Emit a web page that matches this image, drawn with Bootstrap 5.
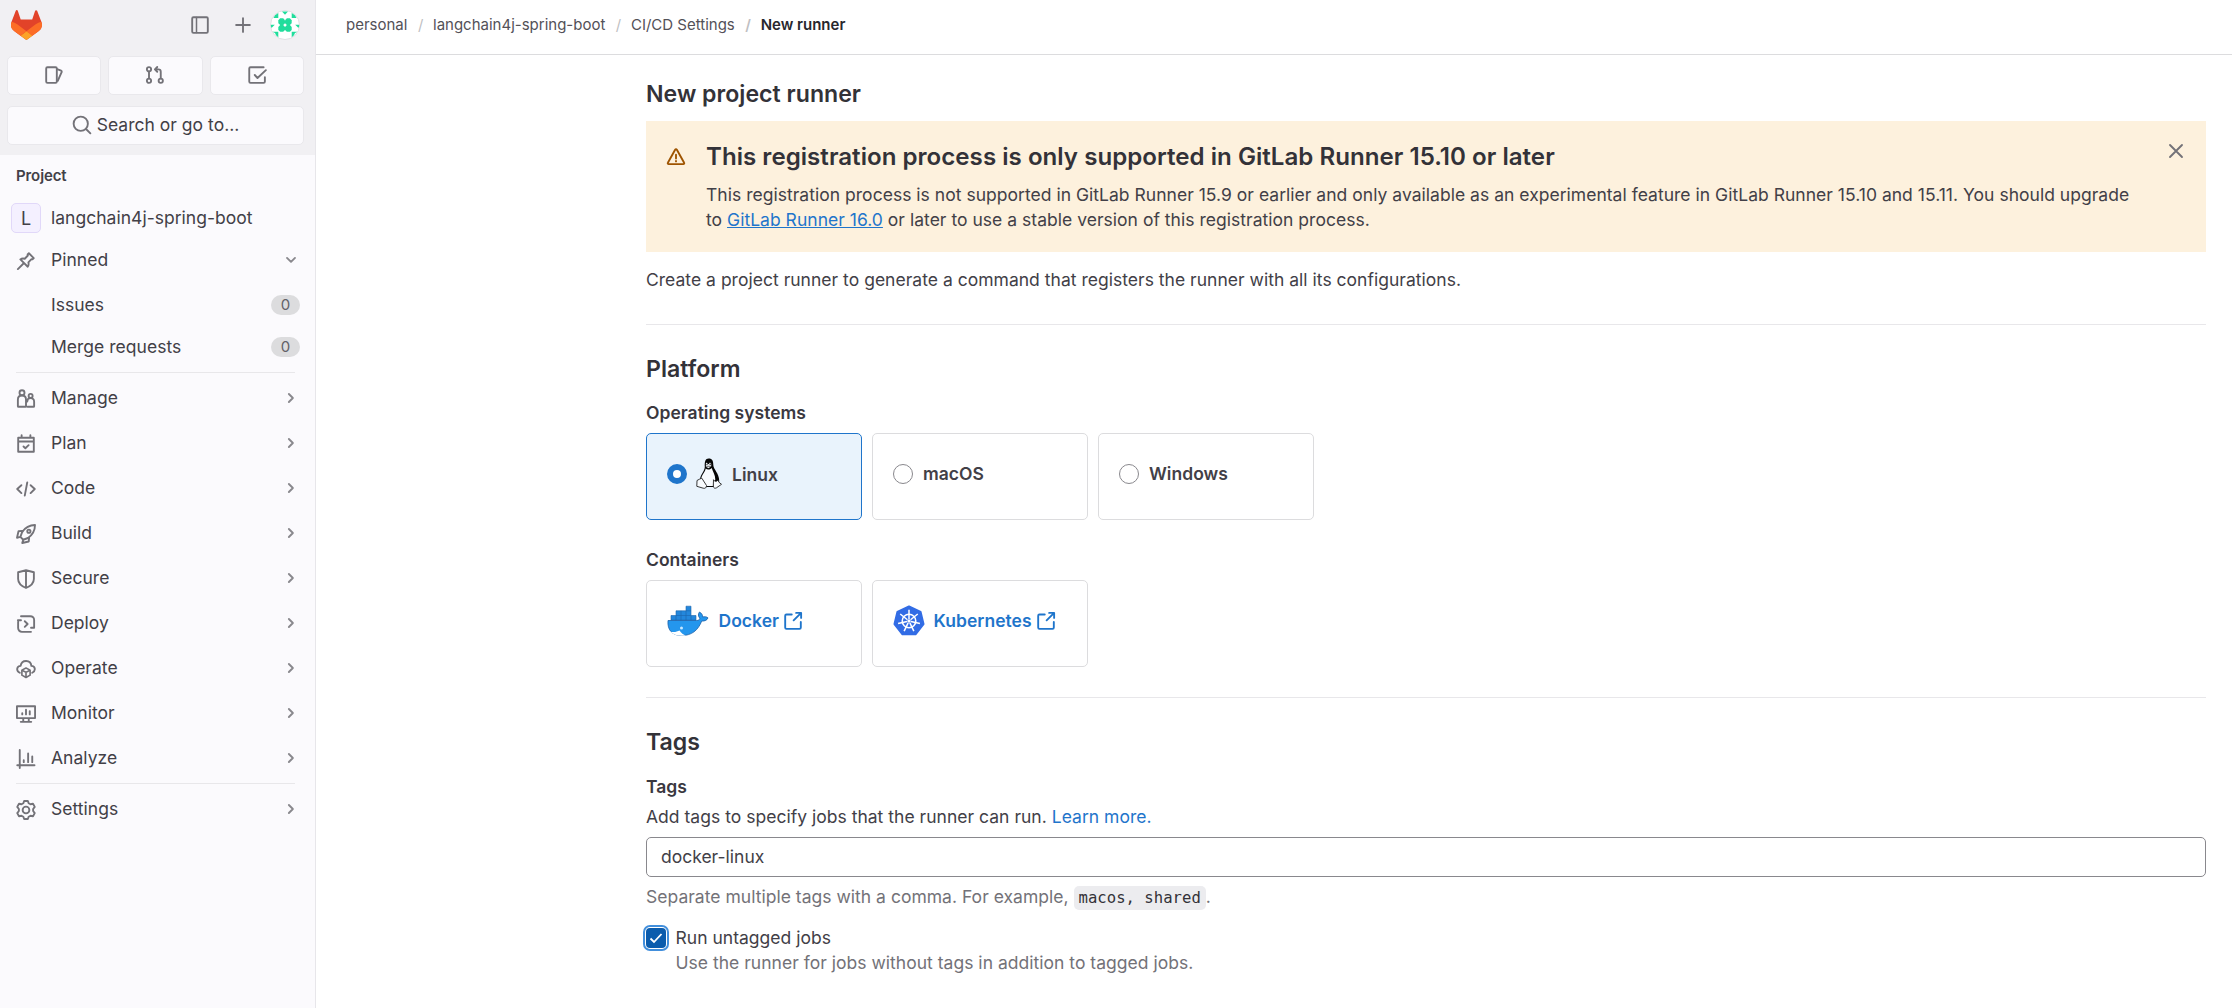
<!DOCTYPE html>
<html lang="en">
<head>
<meta charset="utf-8">
<meta name="viewport" content="width=device-width, initial-scale=1">
<title>New runner</title>
<link href="https://cdn.jsdelivr.net/npm/bootstrap@5.3.0/dist/css/bootstrap.min.css" rel="stylesheet">
<style>
body{font-family:Inter,"Noto Sans",sans-serif;font-size:17.5px;line-height:25px;letter-spacing:.02px;color:#424047;background:#fff;height:1008px;overflow:hidden}
svg{display:block;flex:none}
.ic{width:20px;height:20px;fill:none;stroke:#737278;stroke-width:1.5;stroke-linejoin:round;stroke-linecap:round}
.side{width:316px;background:#fbfafd;border-right:1px solid #e7e6ea;flex:none}
.side-top{height:155px;background:#f1f0f3;padding:10px 11px 0 7px}
.side-brand{height:30px;padding-left:4px;padding-right:4px}
.tile{height:39px;background:#fbfafd;border:1px solid #e9e8ec;border-radius:5px;flex:1}
.tile span{padding-bottom:1px}
.side-label{font-size:15px;font-weight:600;line-height:20px;padding:11px 16px 0;letter-spacing:-.1px}
.proj{height:30px;margin:17px 0 0 11px}
.proj span{margin-left:10px;padding-bottom:2px}
.letter{width:30px;height:30px;border:1px solid #e1d8f9;border-radius:5px;background:#f4f0ff;font-size:18px}
.side-row{height:45px;padding:0 14.5px 0 16px}
.side-row .ic{margin-right:15px;margin-top:2px}
.side-row .chev{margin-right:0;margin-top:0;stroke:#89888d}
.sub-row{height:42px;padding:0 15px 0 51px}
.count{width:29px;height:20px;border-radius:10px;background:#dcdcde;color:#626168;font-size:15px;font-weight:400;line-height:20px;padding:0;margin-top:1px}
.rule{border:0;height:1px;opacity:1;background:#e8e7ea;margin:0}
.top{height:55px;border-bottom:1px solid #dcdcde;padding:0 0 5px 30px;font-size:15px;color:#535158}
.top .breadcrumb{letter-spacing:0}
.top .breadcrumb-item+.breadcrumb-item{padding-left:10.5px}
.top .breadcrumb-item+.breadcrumb-item::before{padding-right:9.7px;color:#bfbfc3}
.top .active{font-weight:600;color:#28272d}
.page{width:1560px;margin-left:330px}
h1,h2,h3{font-weight:600;margin:0;color:#333238}
h1,h2{font-size:23.1px;line-height:30px}
.notice{background:#fdf1dd;height:131px;margin-top:12px;padding:20px 20px 0}
.notice h3{font-size:24.1px;line-height:31px}
.note-text{margin-top:10px;letter-spacing:.025px}
.blue{color:#1f75cb}
.lab{font-weight:600;color:#3a383f}
.choice{width:216px;height:86.5px;border:1px solid #dcdcde;border-radius:5px;padding:0 20px 5px;font-weight:600}
.choice.on{background:#e9f3fc;border-color:#1f75cb}
.choice .form-check-input{width:20px;height:20px;margin:0;border-color:#89888d;flex:none}
.choice.on .form-check-input{border:6.5px solid #1f75cb;background:#fff}
.tag-input{height:40px;border:1px solid #89888d;border-radius:5px;font-size:17.5px;padding:0 14px 1px;color:#424047}
.muted{color:#737278}
.sep-line{height:25px}
.snip{font-family:"DejaVu Sans Mono",monospace;font-size:15.6px;line-height:18px;background:#ececef;color:#333238;border-radius:5px;padding:3px 5px}
.untag{width:20px!important;height:20px!important;margin:0!important;border-radius:4px!important;border:0;background-color:#0b5cad!important;background-image:url("data:image/svg+xml,%3csvg xmlns='http://www.w3.org/2000/svg' viewBox='0 0 20 20'%3e%3cpath fill='none' stroke='%23fff' stroke-width='1.8' d='m4.5 10.500 3.500 3.500 7.500-8'/%3e%3c/svg%3e")!important;box-shadow:0 0 0 1px #fff,0 0 0 3px #428fdc!important;flex:none}
</style>
</head>
<body>
<div class="d-flex h-100">
<nav class="side d-flex flex-column">
  <div class="side-top">
    <div class="side-brand d-flex align-items-center">
      <svg width="31" height="30" viewBox="0 0 25 24"><path d="m24.5 9.5-.03-.09L21.08.56a.9.9 0 0 0-1.69.09l-2.29 7.01H7.82L5.54.65a.9.9 0 0 0-1.7-.09L.45 9.41.42 9.5a6.3 6.3 0 0 0 2.09 7.28l5.2 3.9 4.12 3.11a1.05 1.05 0 0 0 1.26 0l9.33-7.01A6.3 6.3 0 0 0 24.5 9.5Z" fill="#E24329"/><path d="m24.5 9.5-.03-.09a11.44 11.44 0 0 0-4.56 2.05l-7.45 5.63 4.75 3.59 5.21-3.9A6.3 6.3 0 0 0 24.5 9.5Z" fill="#FC6D26"/><path d="m7.7 20.68 4.12 3.11a1.05 1.05 0 0 0 1.27 0l4.11-3.11-4.74-3.59-4.76 3.59Z" fill="#FCA326"/><path d="M5.01 11.46A11.43 11.43 0 0 0 .45 9.41L.42 9.5a6.3 6.3 0 0 0 2.09 7.28l5.2 3.9 4.75-3.59-7.45-5.63Z" fill="#FC6D26"/></svg>
      <svg class="ic ms-auto" viewBox="0 0 16 16"><rect x="1.75" y="1.75" width="12.5" height="12.5" rx="1"/><path d="M5.2 2v12" stroke-width="1.2"/></svg>
      <svg class="ic" style="margin-left:23px" viewBox="0 0 16 16"><path d="M8 2.5v11M2.5 8h11"/></svg>
      <svg style="margin-left:17px" width="30" height="30" viewBox="0 0 30 30"><circle cx="15" cy="15" r="14.5" fill="#fff" stroke="#dfdee2"/><g fill="#21dd9c"><path id="dia" d="m10.200 8.300h3l1.800 1.900v3l-1.800 1.800h-3l-1.900-1.800v-3Z"/><use href="#dia" x="6.700"/><use href="#dia" y="6.700"/><use href="#dia" x="6.700" y="6.700"/><path d="M12 1.500h6L15 4.800ZM5 5.300 8.300 3v5L3.500 8ZM25 5.300 21.700 3v5l4.800 0ZM.8 14.800h4L2 17.500H1ZM29.200 14.800h-4l2.800 2.700h1ZM2.500 21.700H8.300v5.500L6 25.200 5 23ZM27.500 21.700h-5.800v5.500L24 25.200l1-2.200Z"/></g></svg>
    </div>
    <div class="d-flex" style="gap:7px;margin-top:15.5px">
      <div class="tile d-flex align-items-center justify-content-center"><svg class="ic" viewBox="0 0 16 16"><rect x="1.75" y="1.75" width="8.5" height="12.5" rx="1"/><path d="m10.5 3.3 3.2 1.2c.5.2.6.5.5 1l-3.2 7.2"/></svg></div>
      <div class="tile d-flex align-items-center justify-content-center"><svg class="ic" viewBox="0 0 16 16"><circle cx="3.2" cy="3.4" r="1.7"/><circle cx="3.2" cy="12.6" r="1.7"/><circle cx="12.6" cy="12.6" r="1.7"/><path d="M3.2 5.2v5.5M12.6 10.7V5.4c0-1.2-.7-1.9-1.9-1.9H8M9.8 1.6 7.9 3.5l1.9 1.9"/></svg></div>
      <div class="tile d-flex align-items-center justify-content-center"><svg class="ic" viewBox="0 0 16 16"><path d="M13.3 1.75H2.8c-.6 0-1 .4-1 1v10.5c0 .6.4 1 1 1h10.5c.5 0 1-.4 1-1V9.7M6.2 8l2.2 2.4 6.7-6.3"/></svg></div>
    </div>
    <div class="tile d-flex align-items-center justify-content-center" style="margin-top:11px;gap:5px"><svg class="ic" viewBox="0 0 16 16"><circle cx="7" cy="7" r="5.7"/><path d="m11.2 11.2 3.5 3.5"/></svg><span>Search or go to...</span></div>
  </div>
  <div class="side-label">Project</div>
  <div class="proj d-flex align-items-center"><div class="letter d-flex align-items-center justify-content-center">L</div><span>langchain4j-spring-boot</span></div>
  <div class="side-row d-flex align-items-center" style="margin:4px 0 1px"><svg class="ic" viewBox="0 0 16 16"><path d="m10.3 1.8 3.9 3.9-1 1-.8-.2-2.5 2.6c.4 1.5.2 2.6-.5 3.5L3.5 6.7c1-.8 2.100-.9 3.500-.5l2.500-2.600-.2-.8ZM6.200 9.800 1.500 14.500"/></svg><span>Pinned</span><svg class="ic chev ms-auto" viewBox="0 0 16 16"><path d="m4.800 6.300 3.200 3.200 3.200-3.200"/></svg></div>
  <div class="sub-row d-flex align-items-center"><span>Issues</span><span class="count badge ms-auto">0</span></div>
  <div class="sub-row d-flex align-items-center"><span>Merge requests</span><span class="count badge ms-auto">0</span></div>
  <hr class="rule" style="margin:5px 20px 2px 16px">
  <div id="menu"></div>
</nav>
<main class="flex-grow-1">
  <header class="top d-flex align-items-center"><ol class="breadcrumb mb-0"><li class="breadcrumb-item">personal</li><li class="breadcrumb-item">langchain4j-spring-boot</li><li class="breadcrumb-item">CI/CD Settings</li><li class="breadcrumb-item active">New runner</li></ol></header>
  <div class="page">
    <h1 style="padding-top:24px">New project runner</h1>
    <div class="notice d-flex">
      <svg class="ic" style="stroke:#9e5400;margin-top:6px" viewBox="0 0 16 16"><path d="M7.300 2.200 1.500 12.600c-.3.500 0 1.100.6 1.100h11.800c.6 0 .9-.6.600-1.100L8.700 2.200c-.3-.500-1.100-.500-1.400 0ZM8 6.200v3M8 11.200v.3"/></svg>
      <div class="flex-grow-1" style="margin-left:20px"><h3>This registration process is only supported in GitLab Runner 15.10 or later</h3>
      <div class="note-text">This registration process is not supported in GitLab Runner 15.9 or earlier and only available as an experimental feature in GitLab Runner 15.10 and 15.11. You should upgrade<br>to <a class="blue" href="#">GitLab Runner 16.0</a> or later to use a stable version of this registration process.</div></div>
      <svg class="ic" viewBox="0 0 16 16"><path d="m3.200 3.200 9.600 9.600m0-9.600-9.600 9.600"/></svg>
    </div>
    <div style="margin-top:15px">Create a project runner to generate a command that registers the runner with all its configurations.</div>
    <hr class="rule" style="margin-top:32px">
    <h2 style="margin-top:29px">Platform</h2>
    <div class="lab" style="margin-top:16px">Operating systems</div>
    <div class="d-flex" style="gap:10px;margin-top:8px">
      <label class="choice on d-flex align-items-center"><input class="form-check-input" type="radio" name="os"><svg style="margin-left:9px" width="26" height="31" viewBox="0 0 26 31"><path d="M8.800 9C8.500 3.500 9.300.5 12.700.5c3.600 0 4.700 2.700 4.600 6.500 0 4 5.900 8.500 5.900 15.500 0 2.500-1.200 4-3.200 4.500l-2.500 2H8.500L4 21.500c.3-5 4.700-8.500 4.800-12.500Z" fill="#050505"/><path d="M9.700 10.500c1.600 1.600 4 1.500 6-.5 1.200 4 3.600 7 3.600 11.500l-2.300 6.500H9l-4-6.500c.5-4.500 4-7 4.700-11Z" fill="#f8fbfe"/><path d="M9.900 5.300c.9-.9 1.500-.5 1.700.7L13 5.900c.1-1.400 1.700-1.600 2.200-.2v2.500l-2.700 2-2.600-1.500Z" fill="#e8ebee"/><circle cx="11" cy="6.500" r=".6"/><circle cx="14.200" cy="6.300" r=".7"/><path d="M10.200 8.300h4.700" stroke="#333" stroke-width=".7"/><path d="M1 22.500 3.800 21l2-.8 4.700 7.300c0 2.500-1.500 3.200-3.300 2.700L.8 28.300ZM17.300 28l.2-6.300c.9 2.100 3.300 2.100 4.500.3l1 2.300 2.500 2-5 3.500c-1.500.8-3 .5-3.200-1.800Z" fill="#f8fbfe" stroke="#222" stroke-width=".9"/></svg><span style="margin-left:10px;padding-top:1px">Linux</span></label>
      <label class="choice d-flex align-items-center"><input class="form-check-input" type="radio" name="os"><span style="margin-left:10px">macOS</span></label>
      <label class="choice d-flex align-items-center"><input class="form-check-input" type="radio" name="os"><span style="margin-left:10px">Windows</span></label>
    </div>
    <div class="lab" style="margin-top:27.500px">Containers</div>
    <div class="d-flex" style="gap:10px;margin-top:8px">
      <a class="choice blue text-decoration-none d-flex align-items-center"><svg width="42" height="32" viewBox="0 0 42 32"><path d="M1 15.500h28.500c2.200 0 3.200-.8 3.300-2.200-1.800-2.200-1.800-4.500-.3-6.300 2.200 1.300 3.200 3 3.200 5 2-.6 4-.3 5.300.9-1 2.300-3 3.300-6.300 3.200C31 25.500 24.500 30.500 15 30.500 5 30.500.2 25 1 15.500Z" fill="#2496ed" stroke="#1b5fa8" stroke-width=".8"/><path d="M4 10.500h5v-4.700h10V1.200h5v9.300h5v4.600H4ZM9 10.500h15M9 10.500v4.600m5-9.300v9.300m5-9.300v9.300m5-4.600v4.600M19 5.800h5" fill="#2387dc" stroke="#1b65ad" stroke-width=".6"/><path d="M3 26.500c3.500 1 7 .4 9.500-1 1.800 2.500 3.800 4.300 6.500 4.900-6.500 1-12.500-.3-16-3.900Z" fill="#fff"/><circle cx="14.500" cy="23" r="1.500" fill="#c7e7ff"/></svg><span style="margin-left:9.500px">Docker</span><svg class="ic" style="stroke:#1f75cb;margin-left:4px" viewBox="0 0 16 16"><path d="M7 2.750H2.750c-.6 0-1 .4-1 1v9.500c0 .6.4 1 1 1h10.500c.6 0 1-.4 1-1V8.700M10.500 1.500h4v4M14.300 1.700 8.500 7.500"/></svg></a>
      <a class="choice blue text-decoration-none d-flex align-items-center"><svg width="32" height="31" viewBox="0 0 32 31"><path d="m16 1.500 11.600 5.400 2.900 12.200-8 10.200h-13l-8-10.200L4.400 6.900Z" fill="#326ce5" stroke="#326ce5" stroke-width="2" stroke-linejoin="round"/><g fill="none" stroke="#fff" stroke-width="1.500"><circle cx="16" cy="16" r="6.800"/><path id="spoke" d="M16 4.800V14"/><use href="#spoke" transform="rotate(51.430 16 16)"/><use href="#spoke" transform="rotate(102.860 16 16)"/><use href="#spoke" transform="rotate(154.290 16 16)"/><use href="#spoke" transform="rotate(205.710 16 16)"/><use href="#spoke" transform="rotate(257.140 16 16)"/><use href="#spoke" transform="rotate(308.570 16 16)"/></g><circle cx="16" cy="16" r="1.700" fill="#fff"/></svg><span style="margin-left:8.500px">Kubernetes</span><svg class="ic" style="stroke:#1f75cb;margin-left:4px" viewBox="0 0 16 16"><path d="M7 2.750H2.750c-.6 0-1 .4-1 1v9.500c0 .6.4 1 1 1h10.500c.6 0 1-.4 1-1V8.700M10.500 1.500h4v4M14.300 1.700 8.500 7.500"/></svg></a>
    </div>
    <hr class="rule" style="margin-top:30.500px">
    <h2 style="margin-top:29px">Tags</h2>
    <div class="lab" style="margin-top:17px">Tags</div>
    <div style="margin-top:5px">Add tags to specify jobs that the runner can run. <a class="blue text-decoration-none" href="#">Learn more.</a></div>
    <input class="form-control tag-input" style="margin-top:8px" value="docker-linux">
    <div class="muted sep-line" style="margin-top:7px">Separate multiple tags with a comma. For example, <code class="snip">macos, shared</code>.</div>
    <div class="d-flex align-items-center" style="margin-top:16px"><input class="form-check-input untag" type="checkbox" checked><span style="margin-left:9.500px">Run untagged jobs</span></div>
    <div class="muted" style="margin-left:29.500px">Use the runner for jobs without tags in addition to tagged jobs.</div>
  </div>
</main>
</div>
<script>
const items=[
["Manage",'<circle cx="4.800" cy="3" r="2"/><circle cx="11.700" cy="5.500" r="1.600"/><path d="M1.500 13.700V8.500c0-2 1.300-3.300 3.300-3.300S8 6.500 8 8.500v5.200c0 .3-.2.500-.5.500H2c-.300 0-.5-.2-.5-.5ZM9.200 14.200H14c.3 0 .5-.2.5-.5v-3.500c0-1.700-1.200-2.900-2.800-2.900-1.500 0-2.700 1-2.700 2.700"/>'],
["Plan",'<path d="M1.750 3h12.500v11.200H1.750ZM1.750 6h12.500M4.500 1v2M11.500 1v2M6 10l1.500 1.400 2.600-2.500"/>'],
["Code",'<path d="M4.300 5 1 8l3.300 3.300M11.700 5 15 8l-3.300 3.300M9 2.800 7 13.300"/>'],
["Build",'<path d="M15.200.8c-4.700 0-7.700 1.800-10.300 5.700l-1.400 3.800 2.300 2.300 3.800-1.400c3.800-2.700 5.600-5.600 5.600-10.400ZM5 5.500l-3 .3L.8 11l2.700-.7M10.500 11l-.3 3-5.200 1.200.8-2.700"/><circle cx="10.300" cy="5.800" r="1.300"/>'],
["Secure",'<path d="M8 1 14.300 2.600V8c0 3.300-2.300 5.500-6.300 7.200C4 13.500 1.700 11.300 1.700 8V2.600ZM8 1v14"/>'],
["Deploy",'<path d="M4 1.750h7.500a3 3 0 0 1 3 3V11M12 14.250H4.700a3 3 0 0 1-3-3V5M4 5H1.500M12 11h2.500M7 5.800l2.300 2.200L7 10.300"/>'],
["Operate",'<path d="M3 11C-.2 9.500.6 5.500 3.700 5.500 4.500 .2 11.800.4 12.300 5.500c3.200 0 3.800 4 .7 5.500"/><path d="m8 7.200 3.300 1.700v4L8 14.800l-3.300-1.900v-4ZM4.900 9 8 10.700 11.100 9M8 10.700v4" stroke-width="1.300"/>'],
["Monitor",'<path d="M.75 1.750h14.500v9.500H.75ZM5.800 11.500v2.500M10.200 11.500v2.500M3.800 14.250h8.400M5 7.300v1M8 4.500v3.800M11 5.800v2.500"/>'],
["Analyze",'<path d="M3 .8v14.400M1 13h13.800M6.200 9v1.500M9.700 3.500v7M13 6v4.500"/>'],
["Settings",'<circle cx="8" cy="8" r="2.700"/><path d="M6.500.8h3l.6 1.800 1.500.8 2-.4 1.400 2.500L13.700 7.200v1.600l1.300 1.700-1.400 2.500-2-.4-1.500.8-.6 1.800h-3l-.6-1.800-1.500-.8-2 .4L1 10.500l1.300-1.700V7.200L1 5.500 2.400 3l2 .4 1.500-.8Z"/>']];
document.getElementById("menu").innerHTML=items.map(([t,p])=>(t==="Settings"?'<hr class="rule" style="margin:3px 20px 2px 16px">':'')+`<div class="side-row d-flex align-items-center"><svg class="ic" viewBox="0 0 16 16">${p}</svg><span>${t}</span><svg class="ic chev ms-auto" viewBox="0 0 16 16"><path d="m6.300 4.800 3.200 3.200-3.200 3.200"/></svg></div>`).join("");
document.querySelector("input[name=os]").checked=true;
</script>
<script src="https://cdn.jsdelivr.net/npm/bootstrap@5.3.0/dist/js/bootstrap.bundle.min.js"></script>
</body>
</html>
